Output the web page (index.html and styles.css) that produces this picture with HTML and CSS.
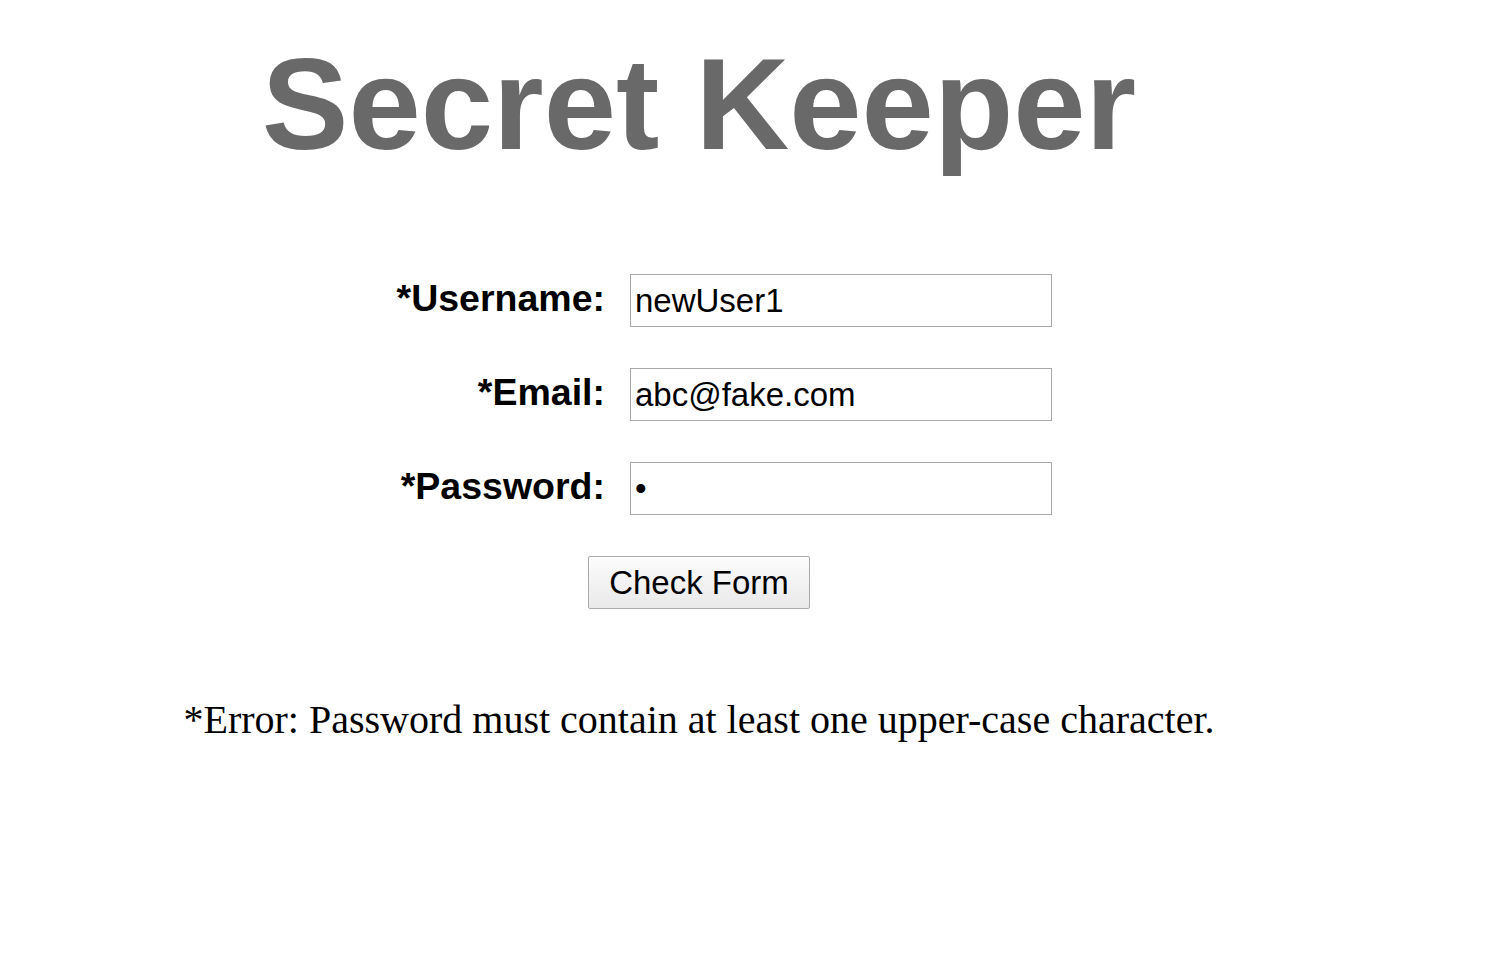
FILE: index.html
```html
<!DOCTYPE html>
<html lang="en">
<head>
<meta charset="utf-8">
<title>Secret Keeper</title>
<link rel="stylesheet" href="styles.css">
</head>
<body>
<div class="page">
  <h1 class="title">Secret Keeper</h1>
  <form class="form">
    <label class="label" for="username">*Username:</label>
    <input class="field" id="username" type="text" value="newUser1">
    <label class="label" for="email">*Email:</label>
    <input class="field" id="email" type="text" value="abc@fake.com">
    <label class="label" for="password">*Password:</label>
    <input class="field" id="password" type="password" value="a">
  </form>
  <div class="actions">
    <button class="btn" type="button">Check Form</button>
  </div>
  <p class="error">*Error: Password must contain at least one upper-case character.</p>
</div>
</body>
</html>
```

FILE: styles.css
```css
html, body {
  margin: 0;
  padding: 0;
  background: #ffffff;
}

.page {
  width: 1398px;
  padding-top: 30px;
  text-align: center;
}

.title {
  margin: 0;
  font-family: "Liberation Sans", Arial, sans-serif;
  font-weight: bold;
  font-size: 130px;
  line-height: 149px;
  color: #696969;
}

.form {
  display: grid;
  grid-template-columns: 1fr 422px;
  column-gap: 25px;
  row-gap: 41px;
  width: 1052px;
  margin: 95px 0 0 0;
}

.label {
  align-self: center;
  text-align: right;
  font-family: "Liberation Sans", Arial, sans-serif;
  font-weight: bold;
  font-size: 37.5px;
  line-height: 44px;
  color: #000000;
  padding-bottom: 6px;
}

.field {
  box-sizing: border-box;
  height: 53px;
  width: 422px;
  margin: 0;
  padding: 0 4px;
  border: 1px solid #a9a9a9;
  border-radius: 0;
  font-family: "Liberation Sans", Arial, sans-serif;
  font-size: 33px;
  color: #000000;
  background: #ffffff;
  outline: none;
}

.actions {
  display: flex;
  justify-content: center;
  margin-top: 41px;
}

.btn {
  box-sizing: border-box;
  width: 222px;
  height: 53px;
  margin: 0;
  padding: 0;
  border: 1px solid #ababab;
  border-radius: 2px;
  background: linear-gradient(#fcfcfc, #e9e9e9);
  font-family: "Liberation Sans", Arial, sans-serif;
  font-size: 33px;
  color: #000000;
}

.error {
  margin: 88px 0 0 0;
  font-family: "Liberation Serif", "Times New Roman", serif;
  font-size: 40px;
  line-height: 46px;
  color: #000000;
}
```
